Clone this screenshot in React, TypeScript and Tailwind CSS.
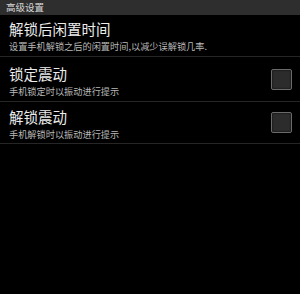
const FONT = { fontFamily: '"Noto Sans CJK SC", "Noto Sans", sans-serif' };

function Row({
  title,
  desc,
  checkbox,
  pt,
  h,
}: {
  title: string;
  desc: string;
  checkbox?: boolean;
  pt: string;
  h: string;
}) {
  return (
    <div className={`flex items-center border-b border-[#262626] pl-[9px] pr-[8px] ${h}`}>
      <div className={`flex-1 flex flex-col self-start ${pt}`}>
        <div className="text-[14.5px] leading-[18px] text-[#ececec]">{title}</div>
        <div className="text-[9.2px] leading-[12px] text-[#b8b8b8] mt-[2px]">{desc}</div>
      </div>
      {checkbox && (
        <div className="w-[21px] h-[21px] rounded-[2px] border border-[#6a6a6a] bg-[#2c2c2c] shadow-[inset_0_0_2px_#000]" />
      )}
    </div>
  );
}

export default function App() {
  return (
    <div className="w-[300px] h-[294px] bg-black overflow-hidden" style={FONT}>
      <div className="h-[15px] bg-[#2e2e2e] pl-[6px] flex items-center text-[9.5px] text-[#d8d8d8]">
        高级设置
      </div>
      <Row
        title="解锁后闲置时间"
        desc="设置手机解锁之后的闲置时间,以减少误解锁几率."
        pt="pt-[5px]"
        h="h-[42px]"
      />
      <Row title="锁定震动" desc="手机锁定时以振动进行提示" checkbox pt="pt-[8px]" h="h-[45px]" />
      <Row title="解锁震动" desc="手机解锁时以振动进行提示" checkbox pt="pt-[6px]" h="h-[42px]" />
    </div>
  );
}
